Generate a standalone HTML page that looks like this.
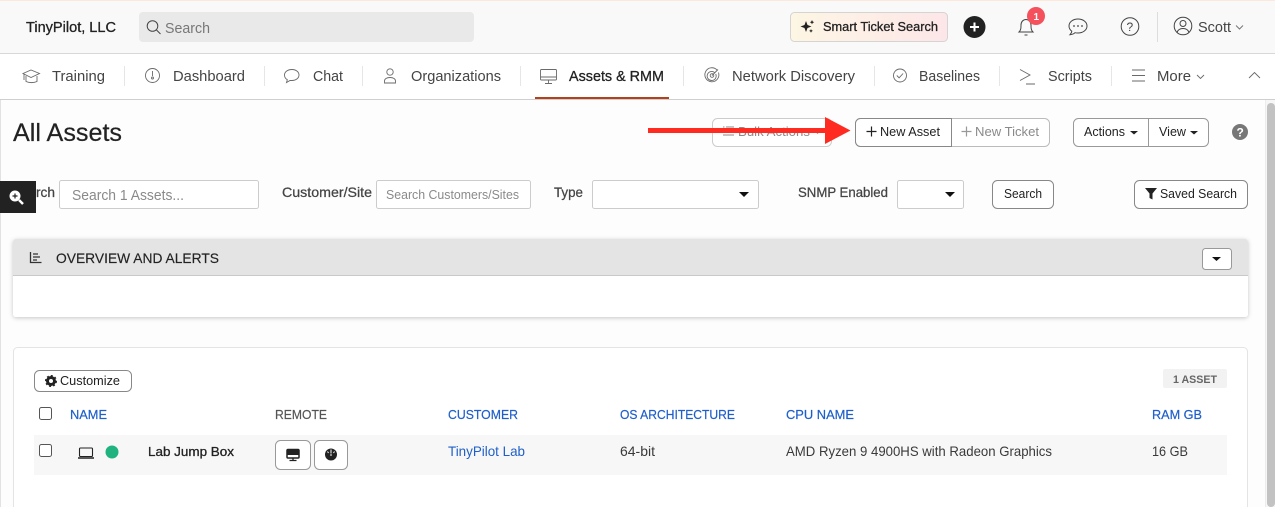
<!DOCTYPE html>
<html><head><meta charset="utf-8"><title>All Assets</title>
<style>
html,body{margin:0;padding:0;background:#fdfdfd;width:1275px;height:507px;overflow:hidden}
svg{display:block}
text{font-family:"Liberation Sans",sans-serif;fill:#3a3a3a;font-size:13.600px}
.n{font-size:14.800px;fill:#444}
.s{stroke:#222;stroke-width:.3px;fill:#222}
.m{stroke:#444;stroke-width:.25px;fill:#444}
.b{font-size:12.800px;fill:#222}
.h{font-size:12.800px;fill:#1f5fc9;stroke:#1f5fc9;stroke-width:.2px}
.g{fill:#8a8a8a}
.ic{fill:none;stroke:#6a6a6a;stroke-width:.9}
</style></head><body>
<svg width="1275" height="507" viewBox="0 0 1275 507" xmlns="http://www.w3.org/2000/svg">
<defs>
<linearGradient id="sm" x1="0" x2="1" y1="0" y2="0"><stop offset="0" stop-color="#fdf6e4"/><stop offset="1" stop-color="#fde6e8"/></linearGradient>
<filter id="sh" x="-2%" y="-10%" width="104%" height="125%"><feDropShadow dx="0" dy="1" stdDeviation="2" flood-color="#000" flood-opacity=".22"/></filter>
</defs>
<!-- header -->
<rect width="1275" height="53" fill="#f9f9f9"/>
<rect width="1275" height="1" fill="#fde9dc"/>
<rect y="53" width="1275" height="1" fill="#d8d8d8"/>
<rect y="54" width="1275" height="45" fill="#fff"/>
<rect y="99" width="1275" height="1" fill="#cfcfcf"/>
<rect y="100" width="1" height="407" fill="#e2e2e2"/>
<text x="26" y="32" class="s" style="font-size:14.800px" textLength="90" lengthAdjust="spacingAndGlyphs">TinyPilot, LLC</text>
<rect x="139" y="12" width="335" height="30" rx="4" fill="#e9e9e9"/>
<circle cx="152.500" cy="26" r="5.300" fill="none" stroke="#444" stroke-width="1"/><path d="M156.500 30l4 4" stroke="#444" fill="none"/>
<text x="165" y="33" class="n" style="fill:#777" textLength="45" lengthAdjust="spacingAndGlyphs">Search</text>
<rect x="790.500" y="12.500" width="157" height="29" rx="4" fill="url(#sm)" stroke="#d4d4d4"/>
<path d="M806 21l1.500 4 4 1.500-4 1.500-1.500 4-1.500-4-4-1.500 4-1.500zM812 20l.7 1.500 1.500.7-1.500.7-.7 1.500-.7-1.500-1.500-.7 1.500-.7zM811 29l.6 1.300 1.300.6-1.300.6-.6 1.300-.6-1.300-1.300-.6 1.300-.6z" fill="#222"/>
<text x="823" y="31" class="s" style="font-size:12.800px" textLength="115" lengthAdjust="spacingAndGlyphs">Smart Ticket Search</text>
<circle cx="974.500" cy="27" r="11" fill="#222"/><path d="M970 27h9M974.500 22.500v9" stroke="#fff" stroke-width="2"/>
<path d="M1019 32c2-2 2-4 2-7 0-3 2-5.500 5-5.500s5 2.500 5 5.500c0 3 0 5 2 7zM1024.500 35h3" fill="none" stroke="#444"/>
<circle cx="1036" cy="16" r="9" fill="#f4515c"/><text x="1033.500" y="20" style="font-size:10px;fill:#fff;font-weight:700">1</text>
<path d="M1078 19c5 0 9 3 9 7s-4 7-9 7c-1 0-2 0-3-.3-1 1-2.500 1.800-5 2 1-1 1.700-2 1.800-3.500-1.800-1.300-2.800-3.200-2.800-5.200 0-4 4-7 9-7z" fill="none" stroke="#444"/>
<circle cx="1074" cy="26" r=".9" fill="#444"/><circle cx="1078" cy="26" r=".9" fill="#444"/><circle cx="1082" cy="26" r=".9" fill="#444"/>
<circle cx="1130" cy="26.500" r="8.800" fill="none" stroke="#444"/><text x="1126.500" y="31" style="font-size:12px;fill:#444">?</text>
<rect x="1157" y="12" width="1" height="30" fill="#ddd"/>
<circle cx="1183" cy="26" r="8.800" fill="none" stroke="#444"/><circle cx="1183" cy="23.500" r="3" fill="none" stroke="#444"/><path d="M1177 32.500c1-3 3-4 6-4s5 1 6 4" fill="none" stroke="#444"/>
<text x="1198" y="32" class="n" textLength="33" lengthAdjust="spacingAndGlyphs">Scott</text>
<path d="M1236 25.500l3.500 3.500 3.500-3.500" fill="none" stroke="#777"/>
<!-- nav -->
<text x="52" y="81" class="n" textLength="53" lengthAdjust="spacingAndGlyphs">Training</text>
<text x="173" y="81" class="n" textLength="72" lengthAdjust="spacingAndGlyphs">Dashboard</text>
<text x="313" y="81" class="n" textLength="30" lengthAdjust="spacingAndGlyphs">Chat</text>
<text x="411" y="81" class="n" textLength="90" lengthAdjust="spacingAndGlyphs">Organizations</text>
<text x="569" y="81" class="s" style="font-size:14.800px" textLength="95" lengthAdjust="spacingAndGlyphs">Assets &amp; RMM</text>
<text x="732" y="81" class="n" textLength="123" lengthAdjust="spacingAndGlyphs">Network Discovery</text>
<text x="919" y="81" class="n" textLength="61" lengthAdjust="spacingAndGlyphs">Baselines</text>
<text x="1048" y="81" class="n" textLength="44" lengthAdjust="spacingAndGlyphs">Scripts</text>
<text x="1157" y="81" class="n" textLength="34" lengthAdjust="spacingAndGlyphs">More</text>
<g fill="#e6e6e6"><rect x="124" y="66" width="1" height="20"/><rect x="264" y="66" width="1" height="20"/><rect x="362" y="66" width="1" height="20"/><rect x="520" y="66" width="1" height="20"/><rect x="683" y="66" width="1" height="20"/><rect x="874" y="66" width="1" height="20"/><rect x="999" y="66" width="1" height="20"/><rect x="1111" y="66" width="1" height="20"/></g>
<rect x="535" y="97" width="134" height="2" fill="#b5401c"/>
<g class="ic">
<path d="M23 73.500l8-3.500 8.500 3.500-8.500 4zM26 76v5.500c3 1.500 8 1.500 11 0V76M24 74v6"/>
<circle cx="152.500" cy="75.500" r="7"/><path d="M152.500 71v5"/><circle cx="152.500" cy="78" r="1"/>
<path d="M292 69.500c4 0 7 2.500 7 5.500s-3 5.500-7 5.500l-2 0-3.500 2 .8-2.800c-1.800-1-2.800-2.800-2.800-4.700 0-3 3-5.500 7.500-5.500z"/>
<circle cx="390" cy="72" r="3.200"/><path d="M384.500 83v-2c0-2 2-3.500 5.500-3.500s5.500 1.500 5.500 3.500v2z"/>
<rect x="540.500" y="69.500" width="16" height="10.500" rx="1"/><path d="M540.500 77h16M545 83.500h7M548.500 80v3.500"/>
<path d="M717 70a7 7 0 1 0 1.500 2.500M714.500 72.500a4.500 4.500 0 1 0 1.200 1.500M712 75.500l6-6"/><circle cx="712" cy="75.500" r="1.800"/>
<circle cx="900" cy="75.500" r="6.500"/><path d="M896.800 75.500l2.300 2.300 4-4.300"/>
<path d="M1020 69.500l10 5.500-10 5.500M1026 84h9"/>
<path d="M1132 70h13M1132 75.500h13M1132 81h13"/>
<path d="M1197 75l3.500 3.500 3.500-3.500M1249 78l5.500-5.500 5.500 5.500"/>
</g>
<!-- scrollbar -->
<rect x="1265" y="100" width="10" height="407" fill="#f6f6f6"/><rect x="1265" y="100" width="1" height="407" fill="#ececec"/>
<rect x="1267" y="103" width="8" height="404" rx="4" fill="#c2c2c2"/>
<!-- title -->
<text x="13" y="141" style="font-size:25px;fill:#222;stroke:#222;stroke-width:.2px" textLength="109" lengthAdjust="spacingAndGlyphs">All Assets</text>
<rect x="712.500" y="118.500" width="119" height="28" rx="5" fill="#fff" stroke="#ccc"/>
<path d="M723 127h1.500M726 127h8M723 131h1.500M726 131h8M723 135h11" stroke="#888" fill="none"/>
<text x="738" y="136" class="g" style="font-size:12.800px" textLength="72" lengthAdjust="spacingAndGlyphs">Bulk Actions</text>
<path d="M814 130.500h7l-3.500 3.500z" fill="#888"/>
<rect x="855.500" y="118.500" width="194" height="28" rx="5" fill="#fff" stroke="#bbb"/>
<rect x="855.500" y="118.500" width="95.500" height="28" rx="5" fill="#fff" stroke="#888"/>
<rect x="945" y="119" width="6" height="27" fill="#fff"/><rect x="945" y="118" width="6" height="1" fill="#888"/><rect x="945" y="146" width="6" height="1" fill="#888"/><rect x="951" y="118" width="1" height="29" fill="#888"/>
<path d="M871.500 126.500v10M866.500 131.500h10" stroke="#222" stroke-width="1.200"/>
<text x="880" y="136" class="b" textLength="60" lengthAdjust="spacingAndGlyphs">New Asset</text>
<path d="M966.500 126.500v10M961.500 131.500h10" stroke="#999" stroke-width="1.200"/>
<text x="975" y="136" class="g" style="font-size:12.800px" textLength="64" lengthAdjust="spacingAndGlyphs">New Ticket</text>
<rect x="1073.500" y="118.500" width="135" height="28" rx="5" fill="#fff" stroke="#999"/>
<rect x="1148" y="119" width="1" height="27" fill="#999"/>
<text x="1084" y="136" class="b" textLength="41" lengthAdjust="spacingAndGlyphs">Actions</text><path d="M1130 131h8l-4 3.500z" fill="#222"/>
<text x="1159" y="136" class="b" textLength="27" lengthAdjust="spacingAndGlyphs">View</text><path d="M1190 131h8l-4 3.500z" fill="#222"/>
<circle cx="1240" cy="132" r="8" fill="#777"/><text x="1236.500" y="136.500" style="font-size:12px;font-weight:700;fill:#fff">?</text>
<!-- arrow -->
<rect x="648" y="128" width="178" height="5" fill="#ff2a20"/><path d="M825 117l25.500 13.500-25.500 13.500z" fill="#ff2a20"/>
<!-- filters -->
<text x="36" y="197" class="m" textLength="19" lengthAdjust="spacingAndGlyphs">rch</text>
<rect x="59.500" y="180.500" width="199" height="28" rx="2" fill="#fff" stroke="#ccc"/>
<text x="72" y="200" class="g" style="font-size:14.800px" textLength="112" lengthAdjust="spacingAndGlyphs">Search 1 Assets...</text>
<rect x="0" y="181" width="36" height="32" fill="#222"/>
<circle cx="15" cy="196" r="5.500" fill="#fff"/><path d="M19 200l4 4" stroke="#fff" stroke-width="2.500"/><path d="M12.500 196h5M15 193.500v5" stroke="#222" stroke-width="1.200"/>
<text x="282" y="197" class="m" textLength="90" lengthAdjust="spacingAndGlyphs">Customer/Site</text>
<rect x="376.500" y="180.500" width="154" height="28" rx="2" fill="#fff" stroke="#ccc"/>
<text x="386" y="199" class="g" style="font-size:12.800px" textLength="133" lengthAdjust="spacingAndGlyphs">Search Customers/Sites</text>
<text x="554" y="197" class="m" textLength="29" lengthAdjust="spacingAndGlyphs">Type</text>
<rect x="592.500" y="180.500" width="166" height="28" rx="2" fill="#fff" stroke="#ccc"/><path d="M739 192h10l-5 5z" fill="#111"/>
<text x="798" y="197" class="m" textLength="90" lengthAdjust="spacingAndGlyphs">SNMP Enabled</text>
<rect x="897.500" y="180.500" width="66" height="28" rx="2" fill="#fff" stroke="#ccc"/><path d="M945 192h10l-5 5z" fill="#111"/>
<rect x="992.500" y="180.500" width="61" height="28" rx="5" fill="#fff" stroke="#888"/>
<text x="1004" y="198" class="b" textLength="38" lengthAdjust="spacingAndGlyphs">Search</text>
<rect x="1134.500" y="180.500" width="113" height="28" rx="5" fill="#fff" stroke="#888"/>
<path d="M1145 188h12l-4.500 5.500v6l-3-1.500v-4.500z" fill="#222"/>
<text x="1160" y="198" class="b" textLength="77" lengthAdjust="spacingAndGlyphs">Saved Search</text>
<!-- overview panel -->
<rect x="13" y="239" width="1235" height="78" rx="3" fill="#fff" filter="url(#sh)"/>
<path d="M13 275v-33a3 3 0 0 1 3-3h1229a3 3 0 0 1 3 3v33z" fill="#e4e4e4"/>
<rect x="13" y="275" width="1235" height="1" fill="#c9c9c9"/>
<path d="M30.500 252v10.500h11M33 254h5M33 257h7M33 260h4" stroke="#333" stroke-width="1.300" fill="none"/>
<text x="56" y="263" style="font-size:14px;fill:#222;stroke:#222;stroke-width:.15px" textLength="163" lengthAdjust="spacingAndGlyphs">OVERVIEW AND ALERTS</text>
<rect x="1202.500" y="248.500" width="29" height="21" rx="3" fill="#fff" stroke="#999"/><path d="M1212 257h9l-4.500 4z" fill="#111"/>
<!-- table panel -->
<rect x="13.500" y="347.500" width="1234" height="180" rx="4" fill="#fff" stroke="#e4e4e4"/>
<rect x="34.500" y="370.500" width="97" height="21" rx="5" fill="#fff" stroke="#888"/>
<circle cx="51" cy="381" r="3.500" fill="none" stroke="#222" stroke-width="3"/><circle cx="51" cy="381" r="5.300" fill="none" stroke="#222" stroke-width="1.400" stroke-dasharray="2 2.100"/>
<text x="60" y="385" class="b" textLength="60" lengthAdjust="spacingAndGlyphs">Customize</text>
<rect x="1163" y="369" width="64" height="19" rx="2" fill="#f2f2f2"/>
<text x="1173" y="383" style="font-size:11px;fill:#666;font-weight:700" textLength="44" lengthAdjust="spacingAndGlyphs">1 ASSET</text>
<rect x="39.500" y="407.500" width="12" height="12" rx="2" fill="#fff" stroke="#555"/>
<text x="70" y="419" class="h" textLength="37" lengthAdjust="spacingAndGlyphs">NAME</text>
<text x="275" y="419" style="font-size:12.800px;fill:#555;stroke:#555;stroke-width:.2px" textLength="52" lengthAdjust="spacingAndGlyphs">REMOTE</text>
<text x="448" y="419" class="h" textLength="70" lengthAdjust="spacingAndGlyphs">CUSTOMER</text>
<text x="620" y="419" class="h" textLength="115" lengthAdjust="spacingAndGlyphs">OS ARCHITECTURE</text>
<text x="786" y="419" class="h" textLength="68" lengthAdjust="spacingAndGlyphs">CPU NAME</text>
<text x="1152" y="419" class="h" textLength="50" lengthAdjust="spacingAndGlyphs">RAM GB</text>
<rect x="34" y="435" width="1193" height="40" fill="#f7f7f7"/>
<rect x="39.500" y="444.500" width="12" height="12" rx="2" fill="#fff" stroke="#555"/>
<rect x="79.500" y="448" width="13" height="8.500" rx="1" fill="none" stroke="#222" stroke-width="1.100"/><path d="M78 458h16" stroke="#222" stroke-width="1.500"/>
<circle cx="112" cy="452" r="6.500" fill="#20b27f"/>
<text x="148" y="456" class="s" style="font-size:13.200px" textLength="86" lengthAdjust="spacingAndGlyphs">Lab Jump Box</text>
<rect x="275.500" y="440.500" width="35" height="29" rx="5" fill="#fff" stroke="#999"/>
<rect x="287" y="449.500" width="12" height="8.500" rx="1" fill="none" stroke="#222" stroke-width="1.500"/><rect x="287" y="449" width="12" height="6" fill="#222"/><path d="M293 458v2M289.500 460.500h7" stroke="#222" stroke-width="1.300"/>
<rect x="314.500" y="440.500" width="33" height="29" rx="5" fill="#fff" stroke="#999"/>
<circle cx="331" cy="454.500" r="6" fill="#222"/><path d="M331 449.500v4M327.500 451.500l1 1.500M334.500 451.500l-1 1.500M331 454v2" stroke="#fff" stroke-width="1"/>
<text x="448" y="456" style="fill:#1f5fc9" textLength="77" lengthAdjust="spacingAndGlyphs">TinyPilot Lab</text>
<text x="620" y="456" textLength="35" lengthAdjust="spacingAndGlyphs">64-bit</text>
<text x="786" y="456" textLength="266" lengthAdjust="spacingAndGlyphs">AMD Ryzen 9 4900HS with Radeon Graphics</text>
<text x="1152" y="456" textLength="36" lengthAdjust="spacingAndGlyphs">16 GB</text>
</svg>
</body></html>
